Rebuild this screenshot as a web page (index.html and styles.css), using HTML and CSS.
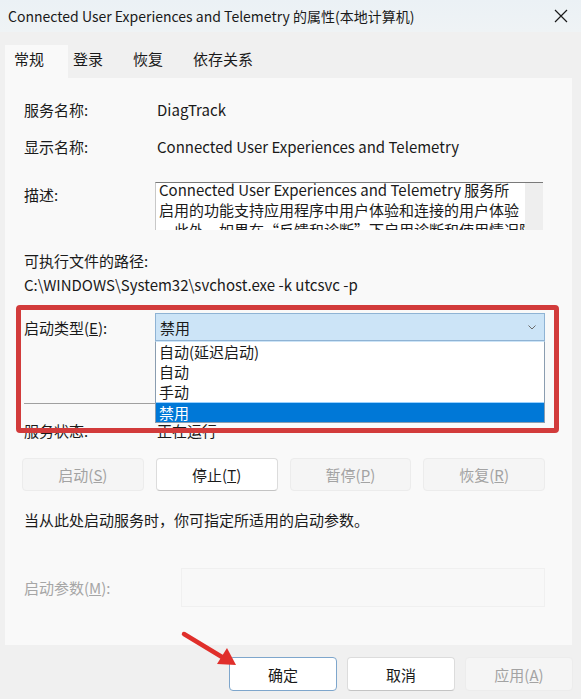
FILE: index.html
```html
<!DOCTYPE html>
<html lang="zh-CN">
<head>
    <meta charset="UTF-8">
    <title>Connected User Experiences and Telemetry 的属性(本地计算机)</title>
    <link rel="stylesheet" href="styles.css">
</head>
<body>
    <div class="dialog">
        <div class="titlebar">
            <span class="title">Connected User Experiences and Telemetry 的属性(本地计算机)</span>
            <svg class="close" width="14" height="14" viewBox="0 0 14 14">
                <path d="M1 1 L13 13 M13 1 L1 13" stroke="#1a1a1a" stroke-width="1.2" fill="none"/>
            </svg>
        </div>

        <div class="tabs">
            <div class="tab active">常规</div>
            <div class="tab">登录</div>
            <div class="tab">恢复</div>
            <div class="tab">依存关系</div>
        </div>

        <div class="panel">
            <div class="row">
                <span class="label">服务名称:</span>
                <span class="value">DiagTrack</span>
            </div>
            <div class="row row-name">
                <span class="label">显示名称:</span>
                <span class="value">Connected User Experiences and Telemetry</span>
            </div>
            <div class="row row-desc">
                <span class="label">描述:</span>
                <div class="desc-box">
                    <div class="desc-text">
                        <span class="desc-line">Connected User Experiences and Telemetry 服务所</span>
                        <span class="desc-line">启用的功能支持应用程序中用户体验和连接的用户体验</span>
                        <span class="desc-line">。此外，如果在“反馈和诊断”下启用诊断和使用情况隐</span>
                    </div>
                    <div class="desc-scroll"></div>
                </div>
            </div>

            <div class="path-label">可执行文件的路径:</div>
            <div class="path-value">C:\WINDOWS\System32\svchost.exe -k utcsvc -p</div>

            <div class="row row-startup">
                <span class="label">启动类型(<u>E</u>):</span>
                <div class="select">
                    <span>禁用</span>
                    <svg class="chevron" width="8" height="5" viewBox="0 0 8 5">
                        <path d="M0.5 0.5 L4 4 L7.5 0.5" stroke="#6b6b6b" stroke-width="1" fill="none"/>
                    </svg>
                    <ul class="options">
                        <li>自动(延迟启动)</li>
                        <li>自动</li>
                        <li>手动</li>
                        <li class="selected">禁用</li>
                    </ul>
                </div>
            </div>

            <div class="separator"></div>

            <div class="row row-status">
                <span class="label">服务状态:</span>
                <span class="value">正在运行</span>
            </div>

            <div class="service-buttons">
                <button class="btn" disabled>启动(<u>S</u>)</button>
                <button class="btn">停止(<u>T</u>)</button>
                <button class="btn" disabled>暂停(<u>P</u>)</button>
                <button class="btn" disabled>恢复(<u>R</u>)</button>
            </div>

            <p class="hint">当从此处启动服务时，你可指定所适用的启动参数。</p>

            <div class="row row-params">
                <span class="label label-disabled">启动参数(<u>M</u>):</span>
                <div class="params-input"></div>
            </div>
        </div>

        <div class="footer">
            <button class="btn focused">确定</button>
            <button class="btn">取消</button>
            <button class="btn" disabled>应用(<u>A</u>)</button>
        </div>

        <!-- 标注 -->
        <div class="mark-box"></div>
        <svg class="mark-arrow" width="581" height="699" viewBox="0 0 581 699">
            <line x1="184" y1="634" x2="222" y2="657" stroke="#e02f2b" stroke-width="4.5" stroke-linecap="round"/>
            <polygon points="236,665 217,664 227,648" fill="#e02f2b"/>
        </svg>
    </div>
</body>
</html>
```

FILE: styles.css
```css
body {
    margin: 0;
    padding: 0;
    font-family: "Noto Sans CJK SC", "Noto Sans", sans-serif;
    font-size: 15px;
    color: #1a1a1a;
    background-color: #f0f0f0;
}

.dialog {
    position: relative;
    width: 581px;
    height: 699px;
    overflow: hidden;
    background-color: #f0f0f0;
}

.titlebar {
    height: 32px;
    display: flex;
    align-items: center;
    justify-content: space-between;
    padding: 0 13px 0 8px;
    background: linear-gradient(#ebf1f5, #eff3f5);
}

.title {
    font-size: 14px;
    white-space: nowrap;
}

.tabs {
    height: 46px;
    display: flex;
    align-items: flex-end;
    padding-left: 5px;
}

.tab {
    height: 33px;
    line-height: 28px;
    padding: 0 25px 0 5px;
}

.tab.active {
    padding: 0 24px 0 9px;
    background-color: #f9f9f9;
}

.panel {
    height: 567px;
    box-sizing: border-box;
    margin: 0 9px 0 5px;
    padding: 18px 27px 0 19px;
    background-color: #f9f9f9;
}

.row {
    display: flex;
    align-items: center;
    height: 26px;
}

.label {
    width: 133px;
    flex-shrink: 0;
}

.label-disabled {
    color: #a6a6a6;
}

.row-name {
    margin-top: 11px;
}

.row-desc {
    margin-top: 23px;
    height: 48px;
    align-items: flex-start;
}

.row-desc .label {
    line-height: 26px;
}

.desc-box {
    display: flex;
    width: 388px;
    height: 48px;
    margin-left: -2px;
    box-sizing: border-box;
    border-top: 1px solid #7a7a7a;
    border-left: 1px solid #c8c8c8;
    background-color: #ffffff;
    overflow: hidden;
}

.desc-text {
    flex: 1;
    min-width: 0;
    margin-top: -3px;
    padding-left: 3px;
    line-height: 20px;
    overflow: hidden;
}

.desc-line {
    display: block;
    white-space: nowrap;
}

.desc-scroll {
    width: 18px;
    flex-shrink: 0;
    background-color: #eeeeee;
}

.path-label {
    margin-top: 19px;
    line-height: 24px;
}

.path-value {
    line-height: 24px;
}

.row-startup {
    margin-top: 16px;
    height: 28px;
}

.select {
    position: relative;
    width: 390px;
    height: 28px;
    margin-left: -2px;
    box-sizing: border-box;
    border: 1px solid #8fb3d4;
    background-color: #cce4f7;
    display: flex;
    align-items: center;
    justify-content: space-between;
    padding: 0 8px 0 4px;
}

.options {
    position: absolute;
    top: 27px;
    left: -1px;
    right: -1px;
    margin: 0;
    padding: 0;
    list-style: none;
    background-color: #ffffff;
    border: 1px solid #8a9db0;
    border-top-color: #cce4f7;
}

.options li {
    height: 20px;
    line-height: 20px;
    padding-left: 3px;
}

.options li.selected {
    background-color: #0078d7;
    color: #ffffff;
    border-top: 1px solid #99d1ff;
    height: 19px;
    line-height: 19px;
}

.separator {
    margin-top: 62px;
    height: 1px;
    background-color: #a0a0a0;
}

.row-status {
    margin-top: 14px;
    height: 24px;
}

.service-buttons {
    margin-top: 16px;
    display: grid;
    grid-template-columns: repeat(4, 1fr);
    gap: 12px;
    margin-left: -2px;
}

.btn {
    height: 33px;
    font-family: inherit;
    font-size: 15px;
    color: #1a1a1a;
    background-color: #ffffff;
    border: 1px solid #dcdcdc;
    border-bottom-color: #c4c4c4;
    border-radius: 4px;
    padding: 0;
}

.btn:disabled {
    color: #a3a3a3;
    background-color: #f5f5f5;
    border-color: #ececec;
}

.hint {
    margin: 17px 0 0 0;
    line-height: 24px;
}

.row-params {
    margin-top: 36px;
    height: 39px;
}

.params-input {
    width: 364px;
    height: 39px;
    margin-left: 24px;
    box-sizing: border-box;
    border: 1px solid #f0f0f0;
    background-color: #f8f8f8;
}

.footer {
    display: flex;
    justify-content: flex-end;
    gap: 10px;
    padding: 12px 8px 0 0;
}

.footer .btn {
    width: 108px;
    height: 34px;
}

.footer .btn.focused {
    border: 1px solid #7ea6cc;
}

.mark-box {
    position: absolute;
    left: 16px;
    top: 305px;
    width: 543px;
    height: 128px;
    box-sizing: border-box;
    border: 5px solid #d23b3b;
    border-radius: 4px;
}

.mark-arrow {
    position: absolute;
    left: 0;
    top: 0;
    pointer-events: none;
}
```
